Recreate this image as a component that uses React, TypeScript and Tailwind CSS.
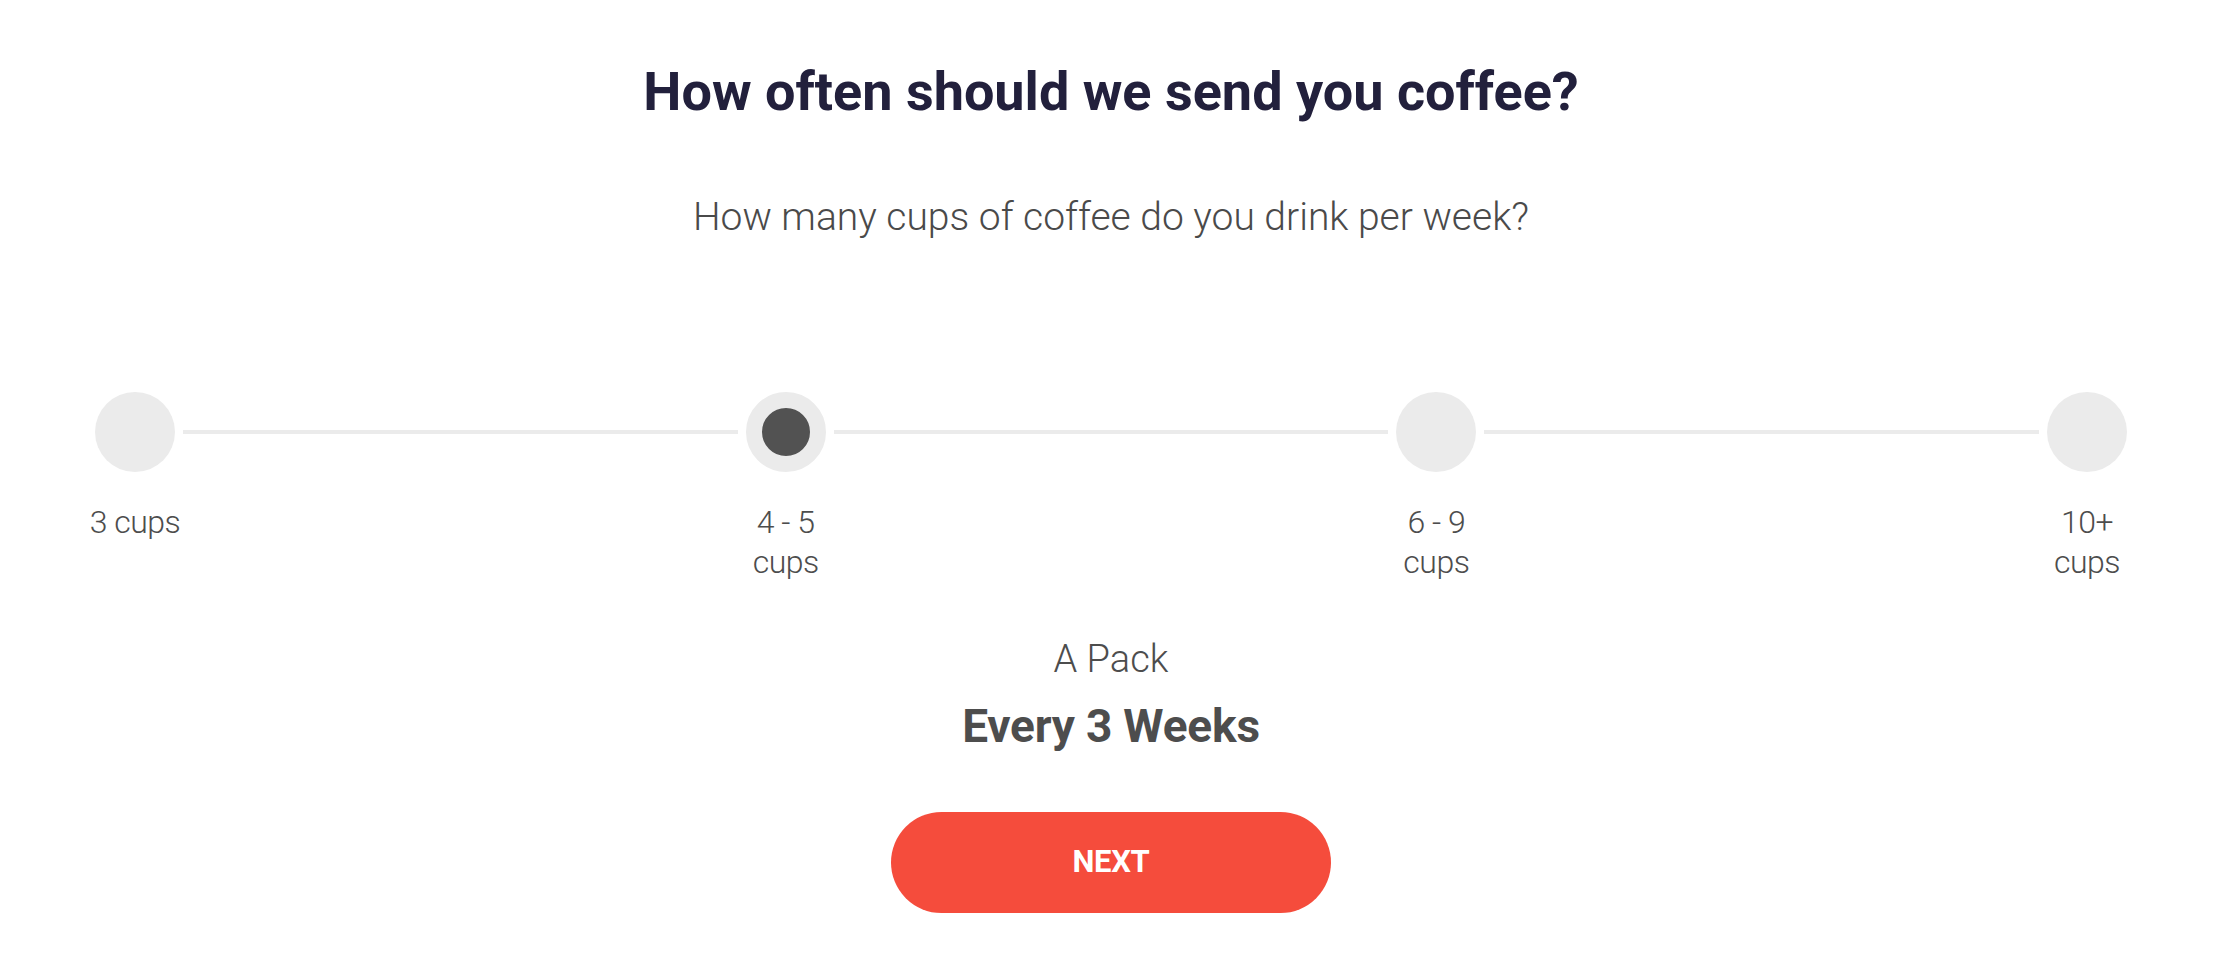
import React, { useState } from "react";

const steps = [
  { id: "3", lines: ["3 cups"] },
  { id: "4-5", lines: ["4 - 5", "cups"] },
  { id: "6-9", lines: ["6 - 9", "cups"] },
  { id: "10+", lines: ["10+", "cups"] },
];

function Step({
  lines,
  active,
  onClick,
}: {
  lines: string[];
  active: boolean;
  onClick: () => void;
}) {
  return (
    <div
      onClick={onClick}
      className="flex flex-col items-center w-20 shrink-0 cursor-pointer"
    >
      {active ? (
        <div className="w-20 h-20 rounded-full border-[16px] border-[#ebebeb] bg-[#525252]" />
      ) : (
        <div className="w-20 h-20 rounded-full bg-[#ebebeb]" />
      )}
      <div className="mt-[30px] flex flex-col items-center text-[32px] leading-[40px] font-light tracking-[-0.5px] text-[#4d4d4d] whitespace-nowrap">
        {lines.map((l) => (
          <span key={l}>{l}</span>
        ))}
      </div>
    </div>
  );
}

export default function App() {
  const [selected, setSelected] = useState("4-5");

  return (
    <div className="w-full min-h-[965px] bg-white pr-[13px] font-['Roboto',sans-serif]">
      <div className="flex flex-col items-center pt-[60px]">
        {/* Heading */}
        <h1 className="text-[54px] leading-[64px] font-bold text-[#22203c]">
          How often should we send you coffee?
        </h1>
        <p className="mt-[69px] text-[39px] leading-[48px] font-light text-[#4a4a4a]">
          How many cups of coffee do you drink per week?
        </p>

        {/* Stepper */}
        <div className="mt-[151px] w-full px-[95px] flex items-start">
          {steps.map((s, i) => (
            <React.Fragment key={s.id}>
              <Step
                lines={s.lines}
                active={selected === s.id}
                onClick={() => setSelected(s.id)}
              />
              {i < steps.length - 1 && (
                <div className="flex-1 h-1 mt-[38px] mx-2 bg-[#ebebeb]" />
              )}
            </React.Fragment>
          ))}
        </div>

        {/* Result */}
        <div className="mt-[53px] text-[38px] leading-[48px] font-light text-[#4d4d4d]">
          A Pack
        </div>
        <div className="mt-[15px] text-[46px] leading-[56px] font-bold text-[#4d4d4d] tracking-[-0.2px]">
          Every 3 Weeks
        </div>

        <button className="mt-[58px] w-[440px] h-[101px] rounded-full bg-[#f54c3c] text-white text-[31px] font-bold tracking-[-0.3px]">
          NEXT
        </button>
      </div>
    </div>
  );
}
